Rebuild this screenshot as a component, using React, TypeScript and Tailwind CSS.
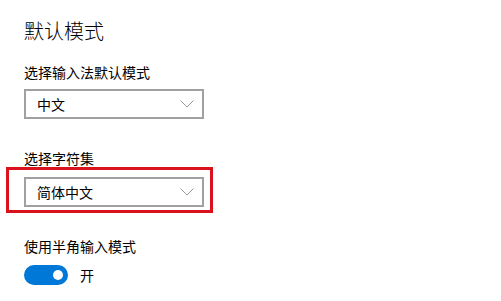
import React from 'react';

function Chevron() {
  return (
    <svg width="14" height="8" viewBox="0 0 14 8" fill="none">
      <polyline points="0.5,0.5 7,7 13.5,0.5" stroke="#9a9a9a" strokeWidth="1" />
    </svg>
  );
}

function Select({ value }: { value: string }) {
  return (
    <div className="w-[180px] h-[30px] border-2 border-[#a0a0a0] bg-white flex items-center justify-between pl-[11px] pr-[8px]">
      <span className="text-[14px] leading-none text-black">{value}</span>
      <Chevron />
    </div>
  );
}

export default function App() {
  return (
    <div
      className="w-[501px] h-[301px] bg-white overflow-hidden pl-6 pt-[17px] text-black"
      style={{ fontFamily: '"Noto Sans CJK SC", "Noto Sans", sans-serif' }}
    >
      <h1 className="text-[20px] leading-[28px] font-light">默认模式</h1>

      <div className="mt-[17px] text-[14px] leading-[20px]">选择输入法默认模式</div>
      <div className="mt-[7px]">
        <Select value="中文" />
      </div>

      <div className="mt-[30px] text-[14px] leading-[18px]">选择字符集</div>
      <div className="-ml-[18px] w-[207px] border-[3px] border-[#d9121b] pt-[7px] pb-[3px] pl-[15px]">
        <Select value="简体中文" />
      </div>

      <div className="mt-[23px] text-[14px] leading-[20px]">使用半角输入模式</div>
      <div className="mt-[9px] flex items-center">
        <div className="w-[44px] h-[20px] rounded-full bg-[#0078d7] flex items-center justify-end pr-[5px]">
          <div className="w-[10px] h-[10px] rounded-full bg-white" />
        </div>
        <span className="ml-[12px] text-[14px] leading-[20px]">开</span>
      </div>
    </div>
  );
}
